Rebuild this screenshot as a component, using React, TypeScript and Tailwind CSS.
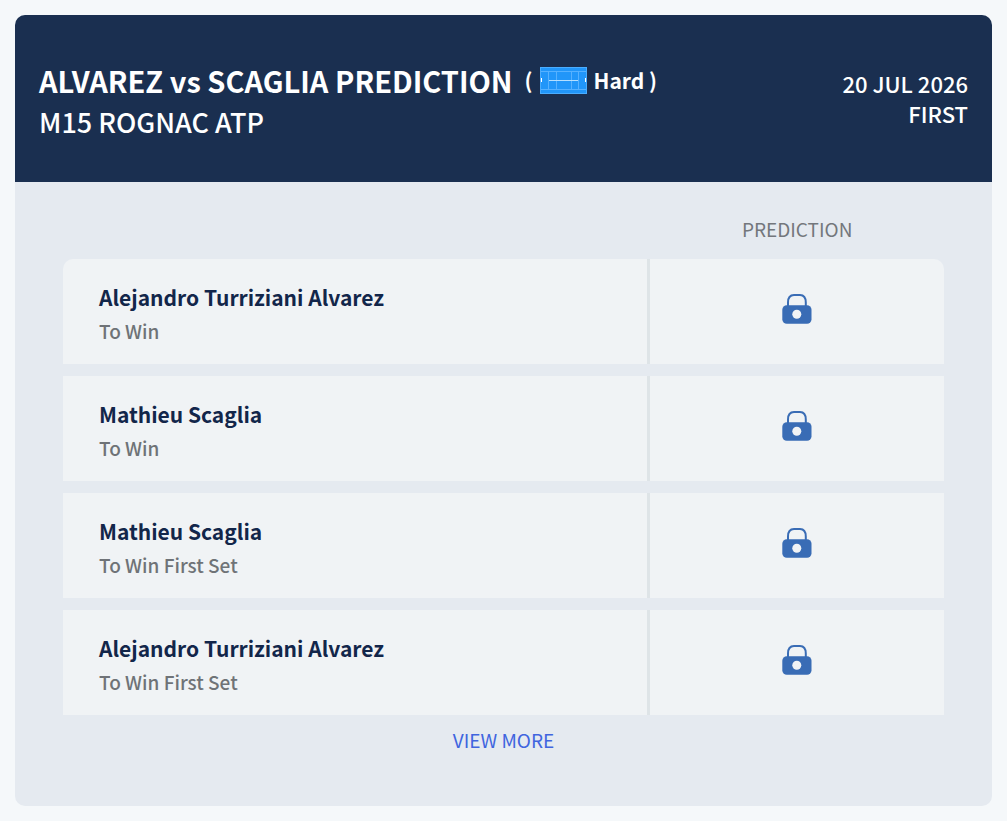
import React from "react";

type Pick = {
  player: string;
  market: string;
};

const picks: Pick[] = [
  { player: "Alejandro Turriziani Alvarez", market: "To Win" },
  { player: "Mathieu Scaglia", market: "To Win" },
  { player: "Mathieu Scaglia", market: "To Win First Set" },
  { player: "Alejandro Turriziani Alvarez", market: "To Win First Set" },
];

function HardCourtIcon() {
  return (
    <svg
      className="h-[27px] w-[47px]"
      viewBox="0 0 47 27"
      fill="none"
      aria-hidden="true"
    >
      <rect width="47" height="27" fill="#2196f9" />
      <rect x="0.5" y="0.5" width="46" height="26" stroke="#4aadff" />
      <path
        d="M1 4.5h45M1 22.5h45M8.5 4.5v18M16.5 4.5v18M31.5 4.5v18M38.5 4.5v18"
        stroke="#56b1ff"
      />
      <path d="M9 13.5h29" stroke="#b5dfff" />
      <path d="M1.5 11v4M45.5 11v4" stroke="#fff" />
    </svg>
  );
}

function LockIcon() {
  return (
    <svg
      className="h-[30px] w-[30px]"
      viewBox="0 0 30 30"
      fill="none"
      aria-hidden="true"
    >
      <path
        d="M6 13V8.5C6 4 8 1 12 1h6c4 0 5.8 3 5.8 7.5V13"
        stroke="#396cb5"
        strokeWidth="2"
      />
      <rect x="0.3" y="11.3" width="29.2" height="18.4" rx="4.5" fill="#396cb5" />
      <circle cx="14.8" cy="20.3" r="4.5" fill="#f1f3f5" />
    </svg>
  );
}

function PickRow({ pick, first }: { pick: Pick; first: boolean }) {
  return (
    <tr>
      <th
        scope="row"
        className={
          "border-r-3 border-[#dee4e7] bg-[#f0f3f5] pt-[21px] pb-4 pl-9 text-left leading-[34px]" +
          (first ? " rounded-tl-[10px]" : "")
        }
      >
        <div className="text-[21px] font-bold text-[#12264a]">{pick.player}</div>
        <div className="text-[19px] font-medium text-[#6f7377]">
          {pick.market}
        </div>
      </th>
      <td className={"bg-[#f0f3f5]" + (first ? " rounded-tr-[10px]" : "")}>
        <button
          type="button"
          aria-label={`Unlock ${pick.player} ${pick.market}`}
          className="mx-auto flex pb-1.5"
        >
          <LockIcon />
        </button>
      </td>
    </tr>
  );
}

export default function App() {
  return (
    <main className="min-h-screen bg-[#f5f8fa] p-[15px] font-['Noto_Sans_CJK_SC',sans-serif]">
      <article className="overflow-hidden rounded-[10px] bg-[#e5eaf0]">
        <header className="flex min-h-[167px] items-center justify-between bg-[#1a2f50] px-6 text-white">
          <div className="pt-1 leading-[41px]">
            <h1 className="flex items-center gap-3 text-[29px] font-bold">
              ALVAREZ vs SCAGLIA PREDICTION
              <span className="flex items-center gap-[7px] text-[21px]">
                (<HardCourtIcon />
                Hard )
              </span>
            </h1>
            <p className="text-[27px] font-medium">M15 ROGNAC ATP</p>
          </div>
          <div className="pb-0.5 text-right text-[22px] font-medium leading-[30px]">
            <p>20 JUL 2026</p>
            <p>FIRST</p>
          </div>
        </header>

        <section className="px-12 pt-5 pb-[53px]">
          <table className="w-full table-fixed border-separate border-spacing-x-0 border-spacing-y-3">
            <thead>
              <tr>
                <td className="w-2/3" />
                <th
                  scope="col"
                  className="w-1/3 pb-1 text-[19px] font-normal leading-[29px] text-[#73777c]"
                >
                  PREDICTION
                </th>
              </tr>
            </thead>
            <tbody>
              {picks.map((pick, i) => (
                <PickRow key={i} pick={pick} first={i === 0} />
              ))}
            </tbody>
          </table>
          <a
            href="#more"
            className="mx-auto block w-fit text-[19px] leading-[26px] text-[#4065df]"
          >
            VIEW MORE
          </a>
        </section>
      </article>
    </main>
  );
}
